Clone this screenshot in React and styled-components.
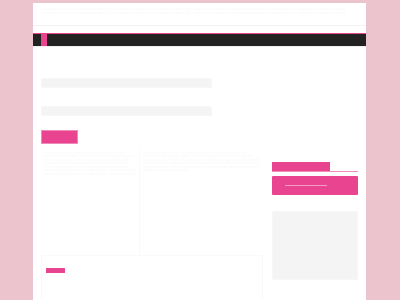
import styled, { createGlobalStyle } from "styled-components";

const GlobalStyle = createGlobalStyle`
  html, body {
    margin: 0;
    padding: 0;
    background: #ecc4ce;
    font-family: "Liberation Sans", Arial, sans-serif;
  }
`;

const pink = "#e8448f";

const filler =
  "Lorem ipsum dolor sit amet consectetur adipiscing elit sed do eiusmod tempor incididunt ut labore et dolore magna aliqua ut enim ad minim veniam quis nostrud exercitation ullamco laboris nisi ut aliquip ex ea commodo consequat";

export default function App() {
  return (
    <>
      <GlobalStyle />
      <Page>
        <Header>
          <Faint>{filler}</Faint>
          <Faint>{filler}</Faint>
        </Header>
        <Nav>
          <NavAccent />
        </Nav>
        <Body>
          <Main>
            <Field />
            <Field $top={18} />
            <Button />
            <Columns>
              <Column>
                <Faint>{filler + " " + filler}</Faint>
              </Column>
              <Column>
                <Faint>{filler + " " + filler}</Faint>
              </Column>
            </Columns>
            <Panel>
              <Badge />
            </Panel>
          </Main>
          <Sidebar>
            <Tabs>
              <Tab />
            </Tabs>
            <BigButton>
              <ButtonLine />
            </BigButton>
            <GrayBox />
          </Sidebar>
        </Body>
      </Page>
    </>
  );
}

const Page = styled.div`
  width: 333px;
  min-height: 297px;
  margin: 3px 0 0 33px;
  background: #ffffff;
  overflow: hidden;
`;

const Header = styled.header`
  height: 23px;
  padding: 5px 8px 0;
  box-sizing: border-box;
  border-bottom: 1px solid #f2f2f2;
  overflow: hidden;
  margin-bottom: 7px;
`;

const Faint = styled.p`
  margin: 0;
  font-size: 3px;
  line-height: 3.5px;
  color: #fafafa;
  overflow: hidden;
`;

const Nav = styled.nav`
  height: 11.5px;
  border-top: 1.5px solid ${pink};
  background: #222222;
  padding-left: 8px;
  display: flex;
  border-bottom: 1px solid #f0f0f0;
`;

const NavAccent = styled.span`
  width: 6px;
  background: ${pink};
`;

const Body = styled.div`
  display: flex;
  gap: 9px;
  padding: 0 8px;
`;

const Main = styled.main`
  width: 222px;
  display: flex;
  flex-direction: column;
  padding-top: 31px;
`;

const Field = styled.div`
  width: 171px;
  height: 10px;
  margin-top: ${(p) => p.$top || 0}px;
  background: #f4f4f4;
  border: 1px solid #f7f7f7;
  border-radius: 1px;
  box-sizing: border-box;
`;

const Button = styled.div`
  width: 37px;
  height: 14px;
  margin-top: 14px;
  background: ${pink};
  border: 0.5px solid #f28ab9;
  box-sizing: border-box;
`;

const Columns = styled.div`
  display: grid;
  grid-template-columns: 99px 1fr;
  height: 105px;
  margin-top: 6px;
`;

const Column = styled.div`
  border-right: 1px solid #f9f9f9;
  padding: 2px 3px;
  overflow: hidden;

  &:last-child {
    border-right: none;
  }
`;

const Panel = styled.div`
  height: 50px;
  border: 1px solid #f9f9f9;
  border-bottom: none;
  padding: 12px 4px 0;
  box-sizing: border-box;
`;

const Badge = styled.div`
  width: 19px;
  height: 5px;
  background: ${pink};
  border-radius: 0.5px;
`;

const Sidebar = styled.aside`
  width: 86px;
  padding-top: 115px;
  display: flex;
  flex-direction: column;
`;

const Tabs = styled.div`
  border-bottom: 1px solid #ee8fb8;
  height: 9px;
`;

const Tab = styled.div`
  width: 58px;
  height: 9px;
  background: ${pink};
`;

const BigButton = styled.div`
  margin-top: 4px;
  height: 19px;
  background: ${pink};
  border-radius: 1px;
  display: flex;
  align-items: center;
  padding-left: 13px;
`;

const ButtonLine = styled.span`
  width: 42px;
  height: 1px;
  background: #f49cc3;
`;

const GrayBox = styled.div`
  margin-top: 16px;
  height: 69px;
  background: #f4f4f4;
  border: 1px solid #f7f7f7;
  box-sizing: border-box;
`;
